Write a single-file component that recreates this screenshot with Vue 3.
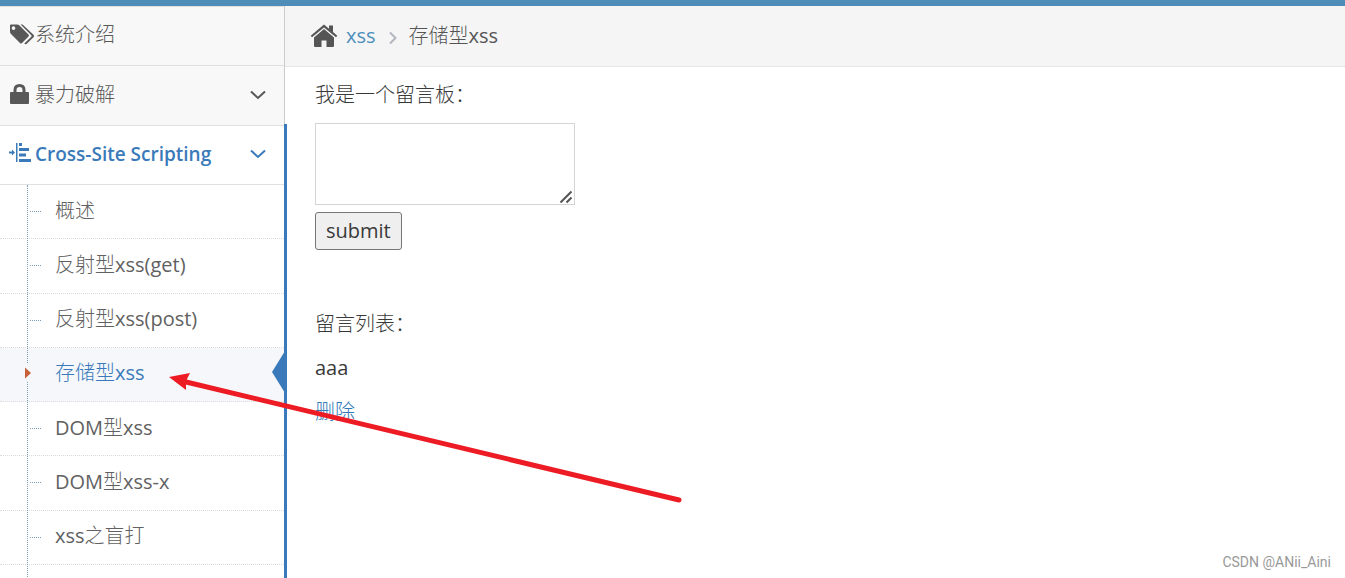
<script setup>
import { ref } from 'vue'

const message = ref('')
const entries = [
  { label: '概述' },
  { label: '反射型xss(get)' },
  { label: '反射型xss(post)' },
  { label: '存储型xss', active: true },
  { label: 'DOM型xss' },
  { label: 'DOM型xss-x' },
  { label: 'xss之盲打' },
  { label: '' }
]
</script>

<template>
  <div class="page">
    <div class="topbar"></div>
    <div class="body">
      <nav class="sidebar">
        <a class="item first" href="#">
          <svg class="icon" width="26" height="22" viewBox="0 0 26 22">
            <path fill="currentColor" fill-rule="evenodd" d="M1 1.500Q1 .5 2 .5H8Q9.500 .5 10.500 1.500L19.500 10.500Q20.500 11.500 19.500 12.500L13 19Q12 20 11 19L2 10Q1 9 1 7.500ZM4.500 2.300a1.800 1.800 0 1 0 .01 0Z" />
            <path fill="currentColor" d="M11.500 .5H13.500L24.500 10.700Q25.800 12 24.500 13.300L17.500 19.900Q16.500 20.700 15.300 19.500L22.300 12.700Q23 12 22.300 11.200Z" />
          </svg>
          <span class="text">系统介绍</span>
        </a>
        <a class="item" href="#">
          <svg class="icon" width="26" height="22" viewBox="0 0 26 22">
            <path fill="currentColor" fill-rule="evenodd" d="M4.500 8V6Q4.500 0 10.500 0T16.500 6V8H19Q20 8 20 9V19Q20 20 19 20H2Q1 20 1 19V9Q1 8 2 8ZM7.500 8H13.500V6Q13.500 3 10.500 3T7.500 6Z" />
          </svg>
          <span class="text">暴力破解</span>
          <svg class="chevron" width="16" height="10" viewBox="0 0 16 10"><path d="M1 1.500L8 8L15 1.500" /></svg>
        </a>
        <div class="group">
          <a class="item open" href="#">
            <svg class="icon" width="26" height="22" viewBox="0 0 26 22">
              <path fill="currentColor" d="M0 8.500H3V6.500L6 9.500L3 12.500V10.500H0ZM7 0H8.500V19H7ZM10 0H13V3H10ZM10 5H20V8H10ZM10 10.500H17V13.500H10ZM10 16H22V19H10Z" />
            </svg>
            <span class="text">Cross-Site Scripting</span>
            <svg class="chevron" width="16" height="10" viewBox="0 0 16 10"><path d="M1 1.500L8 8L15 1.500" /></svg>
          </a>
          <ul class="submenu">
            <li v-for="(entry, i) in entries" :key="i" :class="{ active: entry.active }">
              <a v-if="entry.label" href="#">{{ entry.label }}</a>
              <svg v-if="entry.active" class="caret" width="8" height="18" viewBox="0 0 8 18">
                <path fill="#f5f7fa" d="M0 0H3V18H0Z" />
                <path fill="#c86139" d="M0 3.500L6 9L0 14.500Z" />
              </svg>
              <svg v-if="entry.active" class="notch" width="13" height="42" viewBox="0 0 13 42">
                <path fill="#3a7aba" d="M13 0V42L0 21Z" />
              </svg>
            </li>
          </ul>
        </div>
      </nav>

      <main class="main">
        <div class="crumbs">
          <svg class="home" width="28" height="24" viewBox="0 0 28 24">
            <path fill="currentColor" d="M14 5L24 13.500V22Q24 23 23 23H16.500V16.500H11.500V23H5Q4 23 4 22V13.500Z" />
            <path fill="currentColor" d="M14 .5L19 4.700V1.500H23V8L27.300 11.700L26 13.300L14 3.500L2 13.300L.7 11.700Z" />
          </svg>
          <a href="#">xss</a>
          <svg class="sep" width="8" height="14" viewBox="0 0 8 14"><path d="M1 1.500L6.500 7L1 12.500" /></svg>
          <span>存储型xss</span>
        </div>
        <div class="content">
          <form @submit.prevent>
            <label for="message">我是一个留言板：</label>
            <div class="field">
              <textarea id="message" v-model="message"></textarea>
              <svg class="grip" width="14" height="14" viewBox="0 0 14 14">
                <path d="M1.500 12.500L12.500 1.500M7.500 12.500L12.500 7.500" />
              </svg>
            </div>
            <button type="submit">submit</button>
          </form>
          <section class="messages">
            <p>留言列表：</p>
            <p>aaa</p>
            <a href="#">删除</a>
          </section>
        </div>
      </main>
    </div>

    <svg class="arrow" width="520" height="140" viewBox="0 0 520 140">
      <path d="M18 13L515 132" stroke="#ed1c24" stroke-width="5" stroke-linecap="round" />
      <path fill="#ed1c24" d="M5 9L26 5L22 13L22 22Z" />
    </svg>
    <div class="watermark">CSDN @ANii_Aini</div>
  </div>
</template>

<style>
body {
  margin: 0;
}
</style>

<style scoped>
.page {
  position: relative;
  display: flex;
  flex-direction: column;
  height: 100vh;
  overflow: hidden;
  background: #fff;
  color: #393939;
  font-family: "Open Sans", "Noto Sans CJK SC Light", "Noto Sans CJK SC DemiLight", "Noto Sans CJK SC", sans-serif;
  font-size: 20px;
  line-height: 30px;
}
a {
  color: #4c8fbd;
  text-decoration: none;
}
.topbar {
  flex: none;
  height: 6px;
  background: #4e8db8;
}
.body {
  display: flex;
  flex: 1;
  min-height: 0;
}
.sidebar {
  box-sizing: border-box;
  flex: none;
  width: 285px;
  border-top: 1px solid #e0e0e0;
  border-right: 1px solid #ccc;
}
.item {
  display: flex;
  align-items: center;
  box-sizing: border-box;
  height: 60px;
  padding: 0 18px 2px 9px;
  border-bottom: 1px solid #e0e0e0;
  background: #f8f8f8;
  color: #585858;
  white-space: nowrap;
}
.item.first {
  height: 59px;
}
.icon {
  flex: none;
}
.text {
  flex: 1;
}
.chevron path,
.sep path {
  fill: none;
  stroke: currentColor;
  stroke-width: 2;
}
.group {
  position: relative;
}
.group::after {
  content: "";
  position: absolute;
  top: -2px;
  right: -3px;
  width: 3px;
  height: 100%;
  background: #3a7aba;
}
.item.open {
  height: 59px;
  background: #fff;
  color: #3a7aba;
  font-size: 19px;
  font-weight: 600;
}
.submenu {
  position: relative;
  display: grid;
  grid-auto-rows: 1fr;
  min-height: 434px;
  margin: 0;
  padding: 0;
  list-style: none;
}
.submenu::before {
  content: "";
  position: absolute;
  z-index: 1;
  top: 0;
  bottom: 0;
  left: 27px;
  border-left: 1px dotted #7a9fbc;
}
.submenu li {
  position: relative;
  display: flex;
  align-items: center;
  padding: 0 0 2px 55px;
  border-bottom: 1px dotted #dcdcdc;
}
.submenu li::before {
  content: "";
  position: absolute;
  top: 26px;
  left: 30px;
  width: 11px;
  border-top: 1px dotted #7a9fbc;
}
.submenu li a {
  flex: 1;
  color: #616161;
}
.submenu li.active {
  background: #f5f7fa;
}
.submenu li.active::before {
  display: none;
}
.submenu li.active a {
  color: #3a7aba;
}
.caret {
  position: absolute;
  z-index: 2;
  top: 16px;
  left: 25px;
}
.notch {
  position: absolute;
  top: 3px;
  right: -1px;
}
.main {
  flex: 1;
  min-width: 0;
}
.crumbs {
  display: flex;
  align-items: center;
  box-sizing: border-box;
  height: 61px;
  padding-left: 25px;
  border-bottom: 1px solid #e5e5e5;
  background: #f5f5f5;
  color: #555;
}
.home {
  margin-right: 8px;
}
.sep {
  margin: 3px 12px 0 13px;
  color: #b2b6bf;
}
.content {
  padding: 13px 30px;
}
form {
  display: flex;
  flex-direction: column;
  align-items: flex-start;
}
.field {
  position: relative;
  display: flex;
  margin: 13px 0 7px;
}
textarea {
  box-sizing: border-box;
  width: 260px;
  height: 82px;
  padding: 4px;
  border: 1px solid #d5d5d5;
  outline: none;
  background: #fff;
  font: inherit;
}
textarea::-webkit-resizer {
  background: transparent;
}
.grip {
  position: absolute;
  right: 2px;
  bottom: 1px;
  pointer-events: none;
}
.grip path {
  stroke: #555;
  stroke-width: 2;
}
button {
  height: 38px;
  padding: 0 10px;
  border: 1px solid #767676;
  border-radius: 3px;
  background: #efefef;
  color: #393939;
  font: inherit;
}
.messages {
  margin-top: 59px;
}
.messages p {
  margin: 0 0 14px;
}
.messages a {
  color: #337ab7;
}
.arrow {
  position: absolute;
  z-index: 3;
  top: 368px;
  left: 164px;
  pointer-events: none;
}
.watermark {
  position: absolute;
  right: 14px;
  bottom: 6px;
  color: #999;
  font-family: Roboto, sans-serif;
  font-size: 14px;
  line-height: 20px;
}
</style>
